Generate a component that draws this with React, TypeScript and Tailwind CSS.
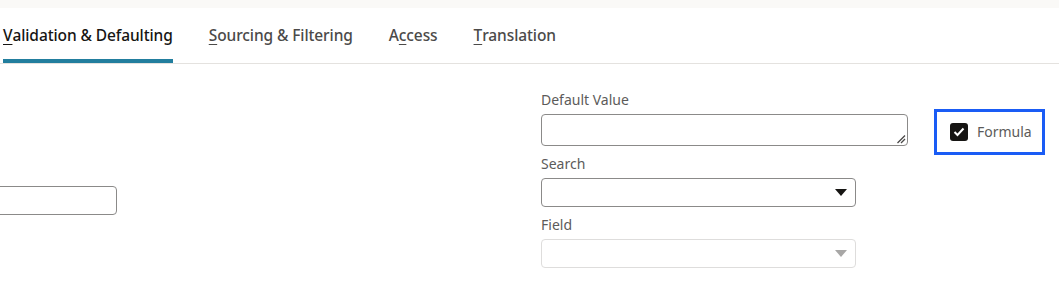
import React from 'react';

const tabs = [
  { pre: '', key: 'V', post: 'alidation & Defaulting', active: true },
  { pre: '', key: 'S', post: 'ourcing & Filtering', active: false },
  { pre: 'A', key: 'c', post: 'cess', active: false },
  { pre: '', key: 'T', post: 'ranslation', active: false },
];

function Caret({ disabled }: { disabled?: boolean }) {
  return (
    <svg width="12" height="7" viewBox="0 0 12 7" className="shrink-0">
      <path d="M0 0 H12 L6 7 Z" fill={disabled ? '#a8a7a6' : '#161513'} />
    </svg>
  );
}

export default function App() {
  return (
    <div className="w-[1059px] h-[285px] bg-white overflow-hidden font-['Noto_Sans',sans-serif] text-[#161513]">
      <div className="h-[8px] bg-[#faf9f7]" />

      <nav className="flex gap-[36px] pl-[3px] border-b border-[#e4e2df] text-[15.5px]">
        {tabs.map((t) => (
          <div
            key={t.post}
            className={
              'h-[55px] flex items-center border-b-4 pt-[5px] font-medium tracking-[-0.1px] ' +
              (t.active ? 'border-[#227e9e] text-[#161513]' : 'border-transparent text-[#4b4a49]')
            }
          >
            {t.pre}
            <span className="underline underline-offset-[3px]">{t.key}</span>
            {t.post}
          </div>
        ))}
      </nav>

      <div className="flex">
        <div className="w-[541px] shrink-0 pt-[122px]">
          <div className="ml-[-200px] w-[317px] h-[29px] border border-[#8b8a89] rounded-[4px]" />
        </div>

        <div className="w-[367px] pt-[26px] flex flex-col gap-[8px] text-[14px]">
          <div className="flex flex-col gap-[4px]">
            <label className="leading-[20px] text-[#5c5b5a]">Default Value</label>
            <div className="relative h-[32px] border border-[#8b8a89] rounded-[4px]">
              <svg width="10" height="10" viewBox="0 0 10 10" className="absolute right-[1px] bottom-[1px]">
                <path d="M1.5 9 L9 1.5 M5 9 L9 5" stroke="#4a4948" strokeWidth="1.3" />
              </svg>
            </div>
          </div>
          <div className="flex flex-col gap-[4px] w-[315px]">
            <label className="leading-[20px] text-[#5c5b5a]">Search</label>
            <div className="h-[29px] border border-[#8b8a89] rounded-[4px] flex items-center justify-end pr-[8px]">
              <Caret />
            </div>
          </div>
          <div className="flex flex-col gap-[4px] w-[315px]">
            <label className="leading-[20px] text-[#5c5b5a]">Field</label>
            <div className="h-[29px] border border-[#dedddc] rounded-[4px] flex items-center justify-end pr-[8px]">
              <Caret disabled />
            </div>
          </div>
        </div>

        <div className="pl-[26px] pt-[45px]">
          <div className="w-[111px] h-[46px] border-[3px] border-[#1a5cf5] flex items-center pl-[13px] gap-[9px]">
            <span className="w-[18px] h-[18px] rounded-[3px] bg-[#161513] flex items-center justify-center">
              <svg width="12" height="10" viewBox="0 0 12 10">
                <path d="M1.5 5 L4.5 8 L10.5 1.5" fill="none" stroke="white" strokeWidth="2" />
              </svg>
            </span>
            <span className="text-[14px] text-[#5c5b5a] leading-[20px]">Formula</span>
          </div>
        </div>
      </div>
    </div>
  );
}
